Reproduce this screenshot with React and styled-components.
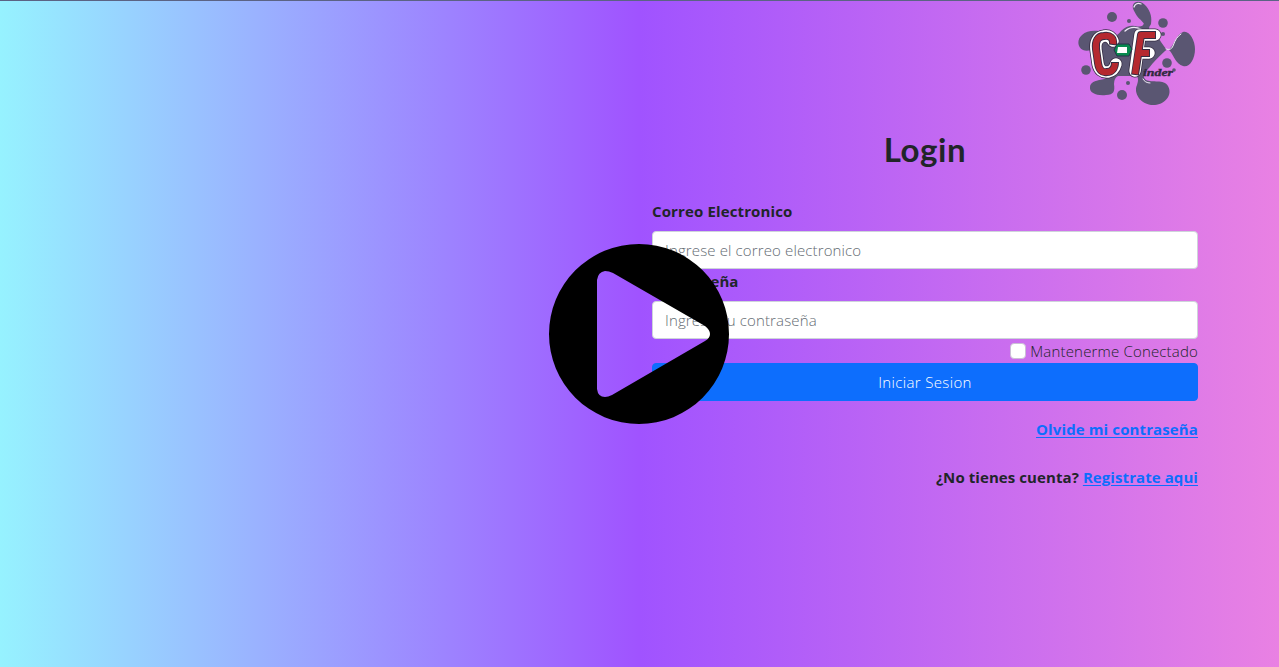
import React from 'react';
import styled, { createGlobalStyle } from 'styled-components';

const GlobalStyle = createGlobalStyle`
  *, *::before, *::after { box-sizing: border-box; }
  body {
    margin: 0;
    overflow: hidden;
    color: #212529;
    font: 300 15px/24px "Open Sans", "Noto Sans", sans-serif;
  }
`;

const Page = styled.main`
  position: relative;
  display: flex;
  justify-content: flex-end;
  height: 100vh;
  min-height: 667px;
  padding-right: 81px;
  border-top: 1px solid #5b6384;
  background: linear-gradient(90deg, #96f2ff 0%, #a053ff 50%, #e981e3 100%);
`;

const Panel = styled.section`
  display: flex;
  flex-direction: column;
  width: 546px;
`;

const Logo = styled.svg`
  align-self: flex-end;
  width: 130px;
  height: 110px;
  margin: -1px -2px 0 0;
`;

const Title = styled.h1`
  margin: 15px 0 26px;
  text-align: center;
  font: 700 33px/48px Lato, "Open Sans", sans-serif;
  letter-spacing: 0.6px;
`;

const Form = styled.form`
  display: flex;
  flex-direction: column;
`;

const Fit = styled.span`
  letter-spacing: ${({ $spacing }) => $spacing || '0'};
`;

const Label = styled.label`
  height: 24px;
  margin-bottom: 8px;
  font-weight: 700;
`;

const Input = styled.input`
  width: 100%;
  height: 38px;
  padding: 6px 12px;
  border: 1px solid #ced4da;
  border-radius: 4px;
  background: #fff;
  font: inherit;
  letter-spacing: 0.13px;
  &::placeholder { color: #646b72; opacity: 1; }
`;

const Remember = styled.label`
  display: flex;
  align-items: center;
  justify-content: flex-end;
  gap: 4px;
  height: 24px;
`;

const Check = styled.input`
  appearance: none;
  width: 16px;
  height: 16px;
  margin: 0;
  border: 1px solid #cbbfd6;
  border-radius: 4px;
  background: #fff;
`;

const Submit = styled.button`
  height: 38px;
  border: 1px solid #0d6efd;
  border-radius: 4px;
  background: #0d6efd;
  color: #fff;
  font: inherit;
  letter-spacing: 0.35px;
`;

const Note = styled.p`
  margin: ${({ $top }) => $top} 0 0;
  text-align: right;
  font-weight: 700;
  letter-spacing: 0.08px;
`;

const Link = styled.a`
  color: #0d6efd;
  text-decoration: underline;
  text-underline-offset: 2px;
`;

const Field = styled.div`
  display: flex;
  flex-direction: column;
`;

const Play = styled.svg`
  position: absolute;
  left: 549px;
  top: 243px;
  width: 180px;
  height: 180px;
`;

function BrandLogo() {
  return (
    <Logo viewBox="0 0 130 110" role="img" aria-label="C-Finder">
      <g fill="#5a5672">
        <path d="M63 5c2-5 9-4 13 1 5 6 6 12 5 18-1 3-4 4-6 2-1-4-5-6-8-10-3-5-5-8-4-11Z" />
        <path d="M74 23h6l-1 6q8 5 12 13l5 7q3 2 6-3c3-5 6-12 11-14 6-2 12 8 12 17 0 11-6 19-12 17-7-2-9-10-13-15q-2-3-5 0c-6 6-12 11-16 17-5 5-7 9-3 12 6 3 18-1 22 6 5 9-3 18-13 19-14 1-22-12-18-20q2-6 0-9H48q-4 2-4 8c1 7 0 11-8 11-9 1-17-2-16-8 1-8 12-6 16-9q2-3-6-12l-5-17q-8 3-12 1c-6-3-6-11-1-15 7-7 22-4 28 0q6 3 11-4 6-6 14-5 8 2 9-3Z" />
        <circle cx="42" cy="17" r="5" />
        <circle cx="93" cy="23" r="4.8" />
        <circle cx="59" cy="21" r="2" />
        <circle cx="93" cy="34" r="2" />
        <circle cx="97" cy="63" r="4.8" />
        <circle cx="16" cy="70" r="4.8" />
        <circle cx="52" cy="95" r="5" />
        <circle cx="58" cy="83" r="2" />
        <circle cx="104" cy="70" r="1.8" />
      </g>
      <g fill="none" stroke="#f0e9f8" strokeLinecap="round">
        <path d="M64 7q2-5 7-3M55 31q7-6 16-2" strokeWidth="1.3" />
        <path d="M96 49q5 2 7-3 3-9 8-12M73 79q2 4 7 4" strokeWidth="1" />
      </g>
      <g fill="none" strokeLinejoin="round" strokeLinecap="round">
        <g stroke="#342c42" strokeWidth="13">
          <path d="M43 41q-3-6-9-5c-7 1-9 7-8 14l2 14q2 9 10 8 6-1 8-8" />
          <path d="m65 71 5-36h15M69 53h10" />
        </g>
        <g stroke="#fff" strokeWidth="11.5">
          <path d="M43 41q-3-6-9-5c-7 1-9 7-8 14l2 14q2 9 10 8 6-1 8-8" />
          <path d="m65 71 5-36h15M69 53h10" />
        </g>
        <g strokeLinecap="butt">
          <g stroke="#342c42" strokeWidth="8">
            <path d="M43 45c1-7-3-10-9-9-6 0-9 5-8 13l2 14c1 7 4 10 9 9 5 0 8-4 8-10" />
            <path d="m65 75 6-40h15M68 53h12" />
          </g>
          <g stroke="#b5292f" strokeWidth="6.2">
            <path d="M43 44c1-6-3-9-9-8-6 0-9 5-8 13l2 14c1 7 4 10 9 9 5 0 8-4 8-9" />
            <path d="m65 74 6-39h14M68 53h11" />
          </g>
        </g>
      </g>
      <path d="M47 44h12l3 5-3 7H47l-3-6Z" fill="#078a4e" stroke="#28304a" />
      <path d="M48 47h9v6H47Z" fill="#fff" />
      <text x="73" y="76" fill="#30283e" stroke="#30283e" strokeWidth="0.4" fontFamily="Liberation Serif, serif" fontSize="11" fontWeight="700" fontStyle="italic" textLength="30" lengthAdjust="spacingAndGlyphs">inder</text>
    </Logo>
  );
}

export default function App() {
  return (
    <>
      <GlobalStyle />
      <Page>
        <Panel>
          <BrandLogo />
          <Title>Login</Title>
          <Form>
            <Field>
              <Label htmlFor="email"><Fit $spacing="0.13px">Correo Electronico</Fit></Label>
              <Input id="email" type="email" placeholder="Ingrese el correo electronico" />
            </Field>
            <Field>
              <Label htmlFor="password"><Fit>Contraseña</Fit></Label>
              <Input id="password" type="password" placeholder="Ingrese su contraseña" />
            </Field>
            <Remember><Check type="checkbox" /><Fit $spacing="0.17px">Mantenerme Conectado</Fit></Remember>
            <Submit type="button">Iniciar Sesion</Submit>
          </Form>
          <Note $top="16px"><Link><Fit $spacing="0.12px">Olvide mi contraseña</Fit></Link></Note>
          <Note $top="24px">¿No tienes cuenta? <Link>Registrate aqui</Link></Note>
        </Panel>
        <Play viewBox="0 0 180 180" aria-label="Reproducir">
          <path fillRule="evenodd" d="M90 0a90 90 0 1 1 0 180A90 90 0 1 1 90 0ZM48 36v109q1 8 8 8 3 0 7-2l93-54q5-3 5-7 0-4-5-8L64 29q-4-2-8-2-7 1-8 9Z" />
        </Play>
      </Page>
    </>
  );
}
